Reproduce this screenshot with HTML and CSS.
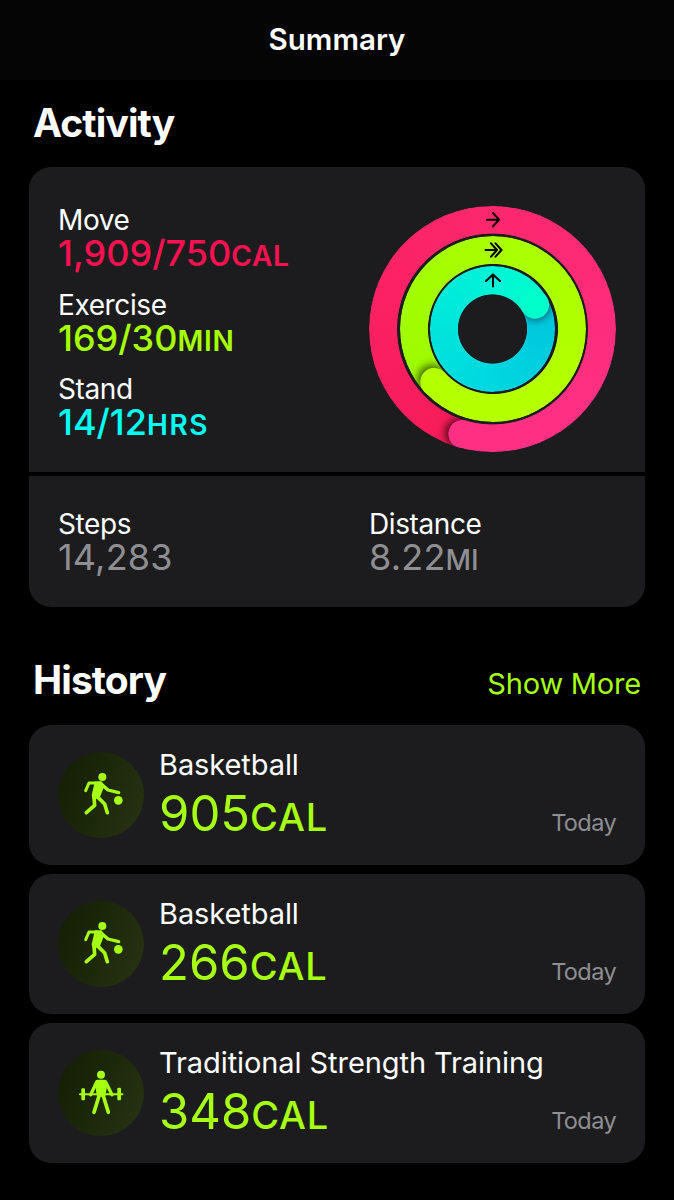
FILE: index.html
```html
<!DOCTYPE html>
<html lang="en">
<head>
<meta charset="utf-8">
<title>Summary</title>
<link rel="stylesheet" href="styles.css">
</head>
<body>
<svg class="defs" width="0" height="0" aria-hidden="true">
  <defs>
    <linearGradient id="badge" x1="0" y1="0.3" x2="1" y2="0.7">
      <stop offset="0" stop-color="#141f04"/>
      <stop offset="1" stop-color="#263211"/>
    </linearGradient>
    <symbol id="basketball" viewBox="23 20 258 258">
      <circle cx="152" cy="149" r="129" fill="url(#badge)"/>
      <g fill="#a6ff12" stroke="#a6ff12" stroke-linecap="round" stroke-linejoin="round">
        <circle cx="156" cy="95" r="12" stroke="none"/>
        <circle cx="204" cy="165" r="13" stroke="none"/>
        <path d="M138 113H116L106 136" fill="none" stroke-width="9"/>
        <path d="M137 112H152L158 121L145 154L131 158L128 150Z" stroke-width="8"/>
        <path d="M155 118L173 134L205 142" fill="none" stroke-width="10"/>
        <path d="M131 154L133 180L108 202" fill="none" stroke-width="11"/>
        <path d="M140 153L163 176L171 202" fill="none" stroke-width="11"/>
      </g>
    </symbol>
    <symbol id="strength" viewBox="23 20 258 258">
      <circle cx="152" cy="149" r="129" fill="url(#badge)"/>
      <g fill="#a6ff12" stroke="#a6ff12" stroke-linecap="round" stroke-linejoin="round">
        <circle cx="152" cy="94" r="12" stroke="none"/>
        <path d="M141 114H163L167 122L161 156H144L138 122Z" stroke-width="9"/>
        <path d="M139 116L121 154M166 116L185 154" fill="none" stroke-width="10"/>
        <path d="M146 158L131 207M159 158L174 207" fill="none" stroke-width="11"/>
        <path d="M89 153H124M182 153H216M122 153H184" fill="none" stroke-width="6"/>
        <rect x="93" y="135" width="11" height="36" rx="3" stroke="none"/>
        <rect x="201" y="133" width="11" height="38" rx="3" stroke="none"/>
      </g>
    </symbol>
  </defs>
</svg>

<header class="navbar">Summary</header>

<main class="content">
  <h2 class="title">Activity</h2>
  <section class="activity">
    <div class="activity-top">
      <div class="metrics">
        <div class="metric"><div class="label">Move</div><div class="value move">1,909/750<span class="unit">CAL</span></div></div>
        <div class="metric"><div class="label">Exercise</div><div class="value exercise">169/30<span class="unit">MIN</span></div></div>
        <div class="metric"><div class="label">Stand</div><div class="value stand">14/12<span class="unit">HRS</span></div></div>
      </div>
      <div class="rings">
        <div class="ring ring-move"></div>
        <div class="ring ring-exercise"></div>
        <div class="ring ring-stand"></div>
        <svg class="ring-overlay" viewBox="-124 -124 248 248" width="248" height="248">
          <defs>
            <filter id="soft" x="-100%" y="-100%" width="300%" height="300%"><feGaussianBlur stdDeviation="4"/></filter>
            <clipPath id="clip-move"><path d="M0 -123.3A123.3 123.3 0 0 1 94.5 -79.2L73 -61.3A95.4 95.4 0 0 0 0 -95.4Z"/></clipPath>
            <clipPath id="clip-exercise"><path d="M0 -93A93 93 0 0 1 80.5 -46.5L56.3 -32.5A65 65 0 0 0 0 -65Z"/></clipPath>
            <clipPath id="clip-stand"><path d="M0 -62.6A62.6 62.6 0 0 1 62.6 0L34.6 0A34.6 34.6 0 0 0 0 -34.6Z"/></clipPath>
          </defs>
          <g transform="rotate(196.3)">
            <g clip-path="url(#clip-move)"><circle cx="3" cy="-109.4" r="14" filter="url(#soft)" opacity=".75"/></g>
            <circle cy="-109.35" r="13.95" fill="#ff3084"/>
          </g>
          <g transform="rotate(228)">
            <g clip-path="url(#clip-exercise)"><circle cx="3" cy="-79" r="14" filter="url(#soft)" opacity=".7"/></g>
            <circle cy="-79" r="14" fill="#b4ff00"/>
          </g>
          <g transform="rotate(60)">
            <g clip-path="url(#clip-stand)"><circle cx="1" cy="-48.6" r="14" filter="url(#soft)" opacity=".6"/></g>
            <circle cy="-48.6" r="14" fill="#00ffcb"/>
          </g>
          <g fill="none" stroke="#000" stroke-width="2" stroke-linecap="round" stroke-linejoin="round">
            <path d="M-6 -109.3H6M0 -116L6 -109.3L0 -102.6"/>
            <path d="M-7.500 -79H4M-2 -85.700L4 -79L-2 -72.300M2.500 -85.700L8.500 -79L2.500 -72.300"/>
            <path d="M0 -42.500V-54.500M-7 -48L0 -54.500L7 -48"/>
          </g>
        </svg>
      </div>
    </div>
    <div class="activity-bottom">
      <div class="metric"><div class="label">Steps</div><div class="value muted">14,283</div></div>
      <div class="metric"><div class="label">Distance</div><div class="value muted">8.22<span class="unit">MI</span></div></div>
    </div>
  </section>

  <div class="history-head">
    <h2 class="title">History</h2>
    <a class="more">Show More</a>
  </div>
  <section class="history">
    <article class="workout">
      <svg class="badge" width="86" height="86"><use href="#basketball"/></svg>
      <div class="info"><div class="name">Basketball</div><div class="energy">905<span class="energy-unit">CAL</span></div></div>
      <div class="date">Today</div>
    </article>
    <article class="workout">
      <svg class="badge" width="86" height="86"><use href="#basketball"/></svg>
      <div class="info"><div class="name">Basketball</div><div class="energy">266<span class="energy-unit">CAL</span></div></div>
      <div class="date">Today</div>
    </article>
    <article class="workout">
      <svg class="badge" width="86" height="86"><use href="#strength"/></svg>
      <div class="info"><div class="name">Traditional Strength Training</div><div class="energy">348<span class="energy-unit">CAL</span></div></div>
      <div class="date">Today</div>
    </article>
  </section>
</main>
</body>
</html>
```

FILE: styles.css
```css
* { box-sizing: border-box; }

body {
  margin: 0;
  height: 1200px;
  overflow: hidden;
  background: #000;
  color: #fff;
  font-family: Inter, "Liberation Sans", sans-serif;
  white-space: nowrap;
}

.defs { display: block; }

.navbar {
  height: 80px;
  background: #050505;
  text-align: center;
  font-size: 29.5px;
  font-weight: 600;
  line-height: 79px;
}

.content { padding: 0 29px; }

.title {
  margin: 0 0 0 4px;
  font-size: 39px;
  font-weight: 700;
  line-height: 48px;
  letter-spacing: -0.9px;
}

.content > .title { padding-top: 19px; height: 87px; }

.activity {
  display: flex;
  flex-direction: column;
  gap: 4px;
  height: 440px;
  border-radius: 22px;
  overflow: hidden;
}

.activity-top {
  display: flex;
  justify-content: space-between;
  height: 305px;
  padding: 36px 29px 0;
  background: #1c1c1e;
}

.activity-bottom {
  display: grid;
  grid-template-columns: 311px 1fr;
  flex: 1;
  padding: 31px 29px 0;
  background: #1c1c1e;
}

.metrics { display: flex; flex-direction: column; gap: 18.5px; }
.metric { height: 66px; }
.label { font-size: 28px; line-height: 34px; letter-spacing: -0.4px; }
.value { font-size: 36px; font-weight: 500; line-height: 32px; }
.unit { font-size: 28px; font-weight: 600; line-height: 0; letter-spacing: 0.8px; }
.move { color: #fa1150; }
.exercise { color: #a6ff00; }
.stand { color: #00fff6; }
.stand .unit { letter-spacing: 1.6px; }
.muted { color: #8e8e93; font-weight: 400; letter-spacing: 0.2px; }
.muted .unit { font-weight: 500; letter-spacing: 0; }

.rings {
  display: grid;
  place-items: center;
  width: 248px;
  height: 248px;
  margin: 2px -0.5px 0 0;
}
.ring, .ring-overlay { grid-area: 1 / 1; }
.ring { border-radius: 50%; }
/* keeps the caps and arrows above the masked rings */
.ring-overlay { z-index: 1; }

.ring-move {
  width: 246.6px;
  height: 246.6px;
  background: conic-gradient(#fc276d 0deg, #ff3084 140deg, #ff3084 196.3deg, #f71b58 196.3deg, #fc276d 360deg);
  mask: radial-gradient(circle, transparent 95px, #000 95.8px);
}
.ring-exercise {
  width: 186px;
  height: 186px;
  background: conic-gradient(#a8ff00 0deg, #b4ff00 140deg, #b4ff00 228deg, #9dfa00 228deg, #a8ff00 360deg);
  mask: radial-gradient(circle, transparent 64.6px, #000 65.4px);
}
.ring-stand {
  width: 125.2px;
  height: 125.2px;
  background: conic-gradient(#00f3d8 0deg, #00ffcb 60deg, #00c4de 60deg, #00d7df 180deg, #00f3d8 360deg);
  mask: radial-gradient(circle, transparent 34.2px, #000 35px);
}

.history-head {
  display: flex;
  justify-content: space-between;
  align-items: baseline;
  padding: 49px 4px 0 0;
  height: 118px;
}
.more { color: #a6ff12; font-size: 29px; line-height: 48px; letter-spacing: -0.2px; }

.history { display: flex; flex-direction: column; gap: 9px; }
.workout {
  display: flex;
  height: 140px;
  padding: 0 29px;
  border-radius: 22px;
  background: #1c1c1e;
}
.badge { margin-top: 27px; }
.info { flex: 1; margin: 22px 0 0 15px; }
.name { font-size: 29px; line-height: 36px; letter-spacing: -0.08px; }
.energy { color: #a6ff12; font-size: 49px; line-height: 62px; }
.energy-unit { font-size: 38px; font-weight: 500; line-height: 0; letter-spacing: 0.8px; }
.date { margin-top: 83px; color: #8e8e93; font-size: 23.5px; line-height: 30px; letter-spacing: -0.6px; }
```
